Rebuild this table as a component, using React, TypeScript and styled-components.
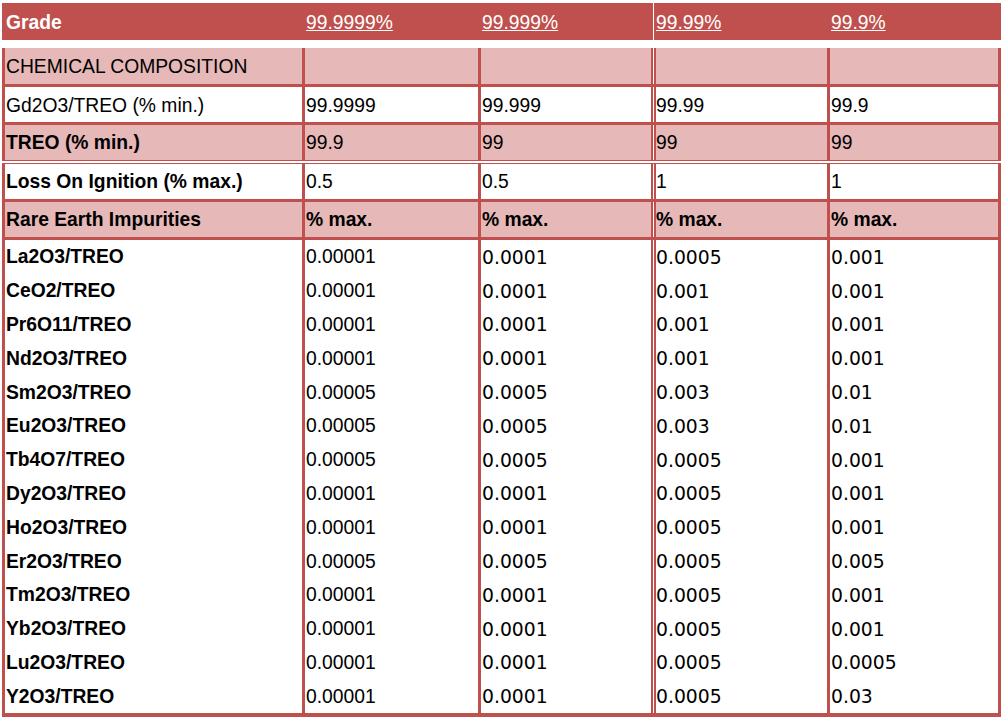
import React from 'react';
import styled, { createGlobalStyle } from 'styled-components';

const RED = '#c0504d';
const PINK = '#e6b8b7';

type Tone = 'head' | 'pink' | 'white';
type Face = 'arial' | 'verdana';

const GlobalStyle = createGlobalStyle`
  html, body {
    margin: 0;
    padding: 0;
    background: #fff;
  }
  body {
    font-family: "Liberation Sans", Arial, sans-serif;
    font-size: 19.3px;
    color: #000;
  }
`;

const Page = styled.div`
  padding: 3px 4px 0 2px;
`;

const Sheet = styled.div`
  width: 999px;
  background: #fff;
`;

const Row = styled.div<{ $h: number; $top?: 'double'; $bottom?: number; $gap?: number }>`
  display: grid;
  grid-template-columns: 300px 176px 173px 176px 174px;
  height: ${p => p.$h}px;
  border-top: ${p => (p.$top ? `4px double ${RED}` : 'none')};
  border-bottom: ${p => (p.$bottom ? `${p.$bottom}px solid ${RED}` : 'none')};
  margin-bottom: ${p => p.$gap ?? 0}px;
`;

const Cell = styled.div<{ $col: number; $tone: Tone; $bold?: boolean; $face?: Face }>`
  display: flex;
  align-items: center;
  min-width: 0;
  padding-top: 2px;
  padding-left: ${p => (p.$col === 3 ? 0 : 1)}px;
  border-left: ${p => (p.$col === 3 ? `5px double ${RED}` : `3px solid ${RED}`)};
  border-right: ${p => (p.$col === 4 ? `3px solid ${RED}` : 'none')};
  background: ${p => (p.$tone === 'head' ? RED : p.$tone === 'pink' ? PINK : '#fff')};
  background-clip: padding-box;
  color: ${p => (p.$tone === 'head' ? '#fff' : '#000')};
  font-family: ${p =>
    p.$face === 'verdana'
      ? '"DejaVu Sans", Verdana, sans-serif'
      : '"Liberation Sans", Arial, sans-serif'};
  font-size: ${p => (p.$face === 'verdana' ? '18.8px' : '19.3px')};
  font-weight: ${p => (p.$bold ? 700 : 400)};
  white-space: nowrap;
  overflow: hidden;
`;

const GradeLink = styled.a`
  color: #fff;
  text-decoration: underline;
  font-weight: 400;
`;

const grades = ['99.9999%', '99.999%', '99.99%', '99.9%'];

const summary: {
  label: string;
  values: string[];
  tone: Tone;
  bold: boolean;
  valueBold?: boolean;
  h: number;
  top?: 'double';
  bottom?: number;
}[] = [
  { label: 'CHEMICAL COMPOSITION', values: ['', '', '', ''], tone: 'pink', bold: false, h: 36, bottom: 3 },
  { label: 'Gd2O3/TREO (% min.)', values: ['99.9999', '99.999', '99.99', '99.9'], tone: 'white', bold: false, h: 35, bottom: 3 },
  { label: 'TREO (% min.)', values: ['99.9', '99', '99', '99'], tone: 'pink', bold: true, h: 34.5 },
  { label: 'Loss On Ignition (% max.)', values: ['0.5', '0.5', '1', '1'], tone: 'white', bold: true, h: 35, top: 'double', bottom: 3 },
  { label: 'Rare Earth Impurities', values: ['% max.', '% max.', '% max.', '% max.'], tone: 'pink', bold: true, valueBold: true, h: 35, bottom: 3.5 },
];

const impurities: [string, string[]][] = [
  ['La2O3/TREO', ['0.00001', '0.0001', '0.0005', '0.001']],
  ['CeO2/TREO', ['0.00001', '0.0001', '0.001', '0.001']],
  ['Pr6O11/TREO', ['0.00001', '0.0001', '0.001', '0.001']],
  ['Nd2O3/TREO', ['0.00001', '0.0001', '0.001', '0.001']],
  ['Sm2O3/TREO', ['0.00005', '0.0005', '0.003', '0.01']],
  ['Eu2O3/TREO', ['0.00005', '0.0005', '0.003', '0.01']],
  ['Tb4O7/TREO', ['0.00005', '0.0005', '0.0005', '0.001']],
  ['Dy2O3/TREO', ['0.00001', '0.0001', '0.0005', '0.001']],
  ['Ho2O3/TREO', ['0.00001', '0.0001', '0.0005', '0.001']],
  ['Er2O3/TREO', ['0.00005', '0.0005', '0.0005', '0.005']],
  ['Tm2O3/TREO', ['0.00001', '0.0001', '0.0005', '0.001']],
  ['Yb2O3/TREO', ['0.00001', '0.0001', '0.0005', '0.001']],
  ['Lu2O3/TREO', ['0.00001', '0.0001', '0.0005', '0.0005']],
  ['Y2O3/TREO', ['0.00001', '0.0001', '0.0005', '0.03']],
];

export default function App() {
  return (
    <Page>
      <GlobalStyle />
      <Sheet>
        <Row $h={37} $gap={8}>
          <Cell $col={0} $tone="head" $bold>
            Grade
          </Cell>
          {grades.map((g, i) => (
            <Cell key={g} $col={i + 1} $tone="head">
              <GradeLink href="#">{g}</GradeLink>
            </Cell>
          ))}
        </Row>

        {summary.map(r => (
          <Row key={r.label} $h={r.h} $top={r.top} $bottom={r.bottom}>
            <Cell $col={0} $tone={r.tone} $bold={r.bold}>
              {r.label}
            </Cell>
            {r.values.map((v, i) => (
              <Cell key={i} $col={i + 1} $tone={r.tone} $bold={r.valueBold}>
                {v}
              </Cell>
            ))}
          </Row>
        ))}

        {impurities.map(([label, values], idx) => (
          <Row key={label} $h={33.8} $bottom={idx === impurities.length - 1 ? 4 : 0}>
            <Cell $col={0} $tone="white" $bold>
              {label}
            </Cell>
            {values.map((v, i) => (
              <Cell key={i} $col={i + 1} $tone="white" $face={i === 0 ? 'arial' : 'verdana'}>
                {v}
              </Cell>
            ))}
          </Row>
        ))}
      </Sheet>
    </Page>
  );
}
